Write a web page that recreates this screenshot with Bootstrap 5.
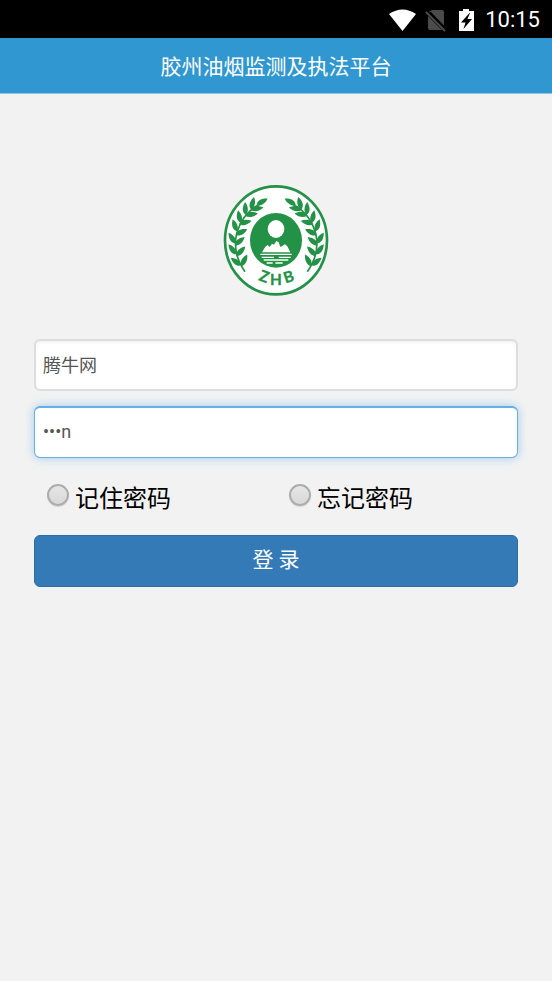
<!DOCTYPE html>
<html lang="zh-CN">
<head>
<meta charset="utf-8">
<meta name="viewport" content="width=device-width, initial-scale=1">
<title>胶州油烟监测及执法平台</title>
<link href="https://cdn.jsdelivr.net/npm/bootstrap@5.3.0/dist/css/bootstrap.min.css" rel="stylesheet">
<style>
body { background: #f2f2f2; color: #000; font-family: Roboto, "Noto Sans CJK SC", sans-serif; }
.status-bar { height: 38px; background: #000; color: #fff; padding: 2px 12px 0; }
.status-time { font-size: 22px; line-height: 36px; margin-left: 9px; }
.title-bar { background: #3097d1; border-bottom: 1px solid #8cc3e3; padding: 13px 0 10px; }
.title-bar h1 { font-size: 21px; line-height: 32px; color: #fff; font-weight: 400; }
.login-main { padding: 86px 34px 34px; }
.login-main .form-control { height: 52px; padding: 0 7px 2px; font-size: 18px; color: #555; border: 2px solid #ddd; border-radius: 6px; box-shadow: inset 0 2px 3px rgba(0,0,0,.05); }
.login-main .form-control.active-field { border: 1px solid #66afe9; border-top-width: 2px; padding: 0 8px 2px; box-shadow: 0 0 10px rgba(102,175,233,.6); }
.fields { margin-top: 39px; gap: 15px; }
.choices { padding: 19px 0 18px; }
.choice { padding-left: 13px; }
.choice-label { font-size: 24px; line-height: 36px; padding-top: 4px; margin-left: 6px; }
.round-check { appearance: none; width: 22px; height: 22px; margin: 0 0 4px; border: 2px solid #adadad; border-radius: 50%; background: linear-gradient(#e6e6e6, #d8d8d8); box-shadow: 0 1px 1px rgba(0,0,0,.12); }
.round-check:checked { background: radial-gradient(#337ab7 40%, #ddd 45%); }
.btn-login { height: 52px; padding: 0 0 2px; background: #337ab7; border: 1px solid #2e6da4; border-radius: 6px; color: #fff; font-size: 21px; line-height: 48px; }
.btn-login:hover { background: #286090; color: #fff; }
</style>
<script defer src="https://cdn.jsdelivr.net/npm/bootstrap@5.3.0/dist/js/bootstrap.bundle.min.js"></script>
</head>
<body>
<div class="status-bar d-flex align-items-center justify-content-end">
  <svg width="88" height="36" viewBox="0 1 88 36" aria-hidden="true">
    <path fill="#fff" d="M1 13Q14.500 4 28 13L14.500 30Z"/>
    <path fill="#4b4b4b" d="M40 11.500 44 9H54Q56 9 56 11V24.500L43 11ZM40 15 54 29H42Q40 29 40 27Z"/>
    <path stroke="#4b4b4b" stroke-width="1.800" d="M38 11 57 30"/>
    <path fill="#fff" d="M71 10H75V8H81V10H86V30H71Z"/>
    <path fill="#000" d="M81.500 12 73 21.500H77.500L75.500 28 84 18H79.500L82 12Z"/>
  </svg>
  <span class="status-time">10:15</span>
</div>
<header class="title-bar text-center"><h1 class="m-0">胶州油烟监测及执法平台</h1></header>
<main class="login-main">
  <svg class="d-block mx-auto" width="120" height="120" viewBox="0 0 360 360" role="img" aria-label="ZHB">
    <defs>
      <path id="leaf" d="M0 0C8-11 22-12 39 0C26 9 10 9 0 0Z"/>
      <g id="branch">
        <path fill="none" stroke="#249246" stroke-width="5" d="M87 275C62 240 53 200 62 160C74 118 98 86 140 68"/>
        <g fill="#249246">
          <use href="#leaf" transform="translate(122 76) rotate(-32)"/>
          <use href="#leaf" transform="translate(106 89) rotate(-78)"/>
          <use href="#leaf" transform="translate(104 90) rotate(-11)"/>
          <use href="#leaf" transform="translate(90 105) rotate(-94)"/>
          <use href="#leaf" transform="translate(87 107) rotate(-10)"/>
          <use href="#leaf" transform="translate(75 129) rotate(-103)"/>
          <use href="#leaf" transform="translate(69 133) rotate(-16)"/>
          <use href="#leaf" transform="translate(64 154) rotate(-111)"/>
          <use href="#leaf" transform="translate(59 166) rotate(-28)"/>
          <use href="#leaf" transform="translate(60 190) rotate(-125)"/>
          <use href="#leaf" transform="translate(57 197) rotate(-42)"/>
          <use href="#leaf" transform="translate(62 223) rotate(-129)"/>
          <use href="#leaf" transform="translate(62 229) rotate(-49)"/>
          <use href="#leaf" transform="translate(76 256) rotate(-144)"/>
          <use href="#leaf" transform="translate(77 259) rotate(-65)"/>
        </g>
      </g>
    </defs>
    <ellipse cx="180" cy="181" rx="153" ry="162" fill="#fff" stroke="#249246" stroke-width="8"/>
    <use href="#branch"/>
    <use href="#branch" transform="translate(361 0) scale(-1 1)"/>
    <ellipse cx="180" cy="181" rx="78" ry="82" fill="#249246"/>
    <g fill="#fff">
      <ellipse cx="180" cy="147" rx="25" ry="27"/>
      <path d="M138 217L148 200L155 195L161 201L168 191L174 194L181 183L188 187L193 201L200 197L207 193L214 199L223 217Z"/>
      <path d="M133 221H227V225H133ZM137 230H174V234H137ZM188 230H224V234H188ZM143 238H217V242H143ZM152 247H170V251H152ZM178 247H200V251H178Z"/>
    </g>
    <g fill="#249246" stroke="#249246" stroke-width="1" font-family="Lato, sans-serif" font-size="46" font-weight="700" text-anchor="middle">
      <text transform="translate(139 305) rotate(20)">Z</text>
      <text transform="translate(180 314)">H</text>
      <text transform="translate(223 306) rotate(-18)">B</text>
    </g>
  </svg>
  <form>
    <div class="fields d-flex flex-column">
      <input class="form-control" type="text" aria-label="用户名" value="腾牛网">
      <input class="form-control active-field" type="text" aria-label="密码" autocomplete="off" value="•••n">
    </div>
    <div class="choices">
      <div class="row gx-0">
        <div class="col-6 d-flex align-items-center"><div class="choice d-flex align-items-center"><input class="round-check" type="radio" name="pwd" id="remember"><label class="choice-label" for="remember">记住密码</label></div></div>
        <div class="col-6 d-flex align-items-center"><div class="choice d-flex align-items-center"><input class="round-check" type="radio" name="pwd" id="forgot"><label class="choice-label" for="forgot">忘记密码</label></div></div>
      </div>
    </div>
    <button class="btn btn-login w-100" type="button">登 录</button>
  </form>
</main>
</body>
</html>
